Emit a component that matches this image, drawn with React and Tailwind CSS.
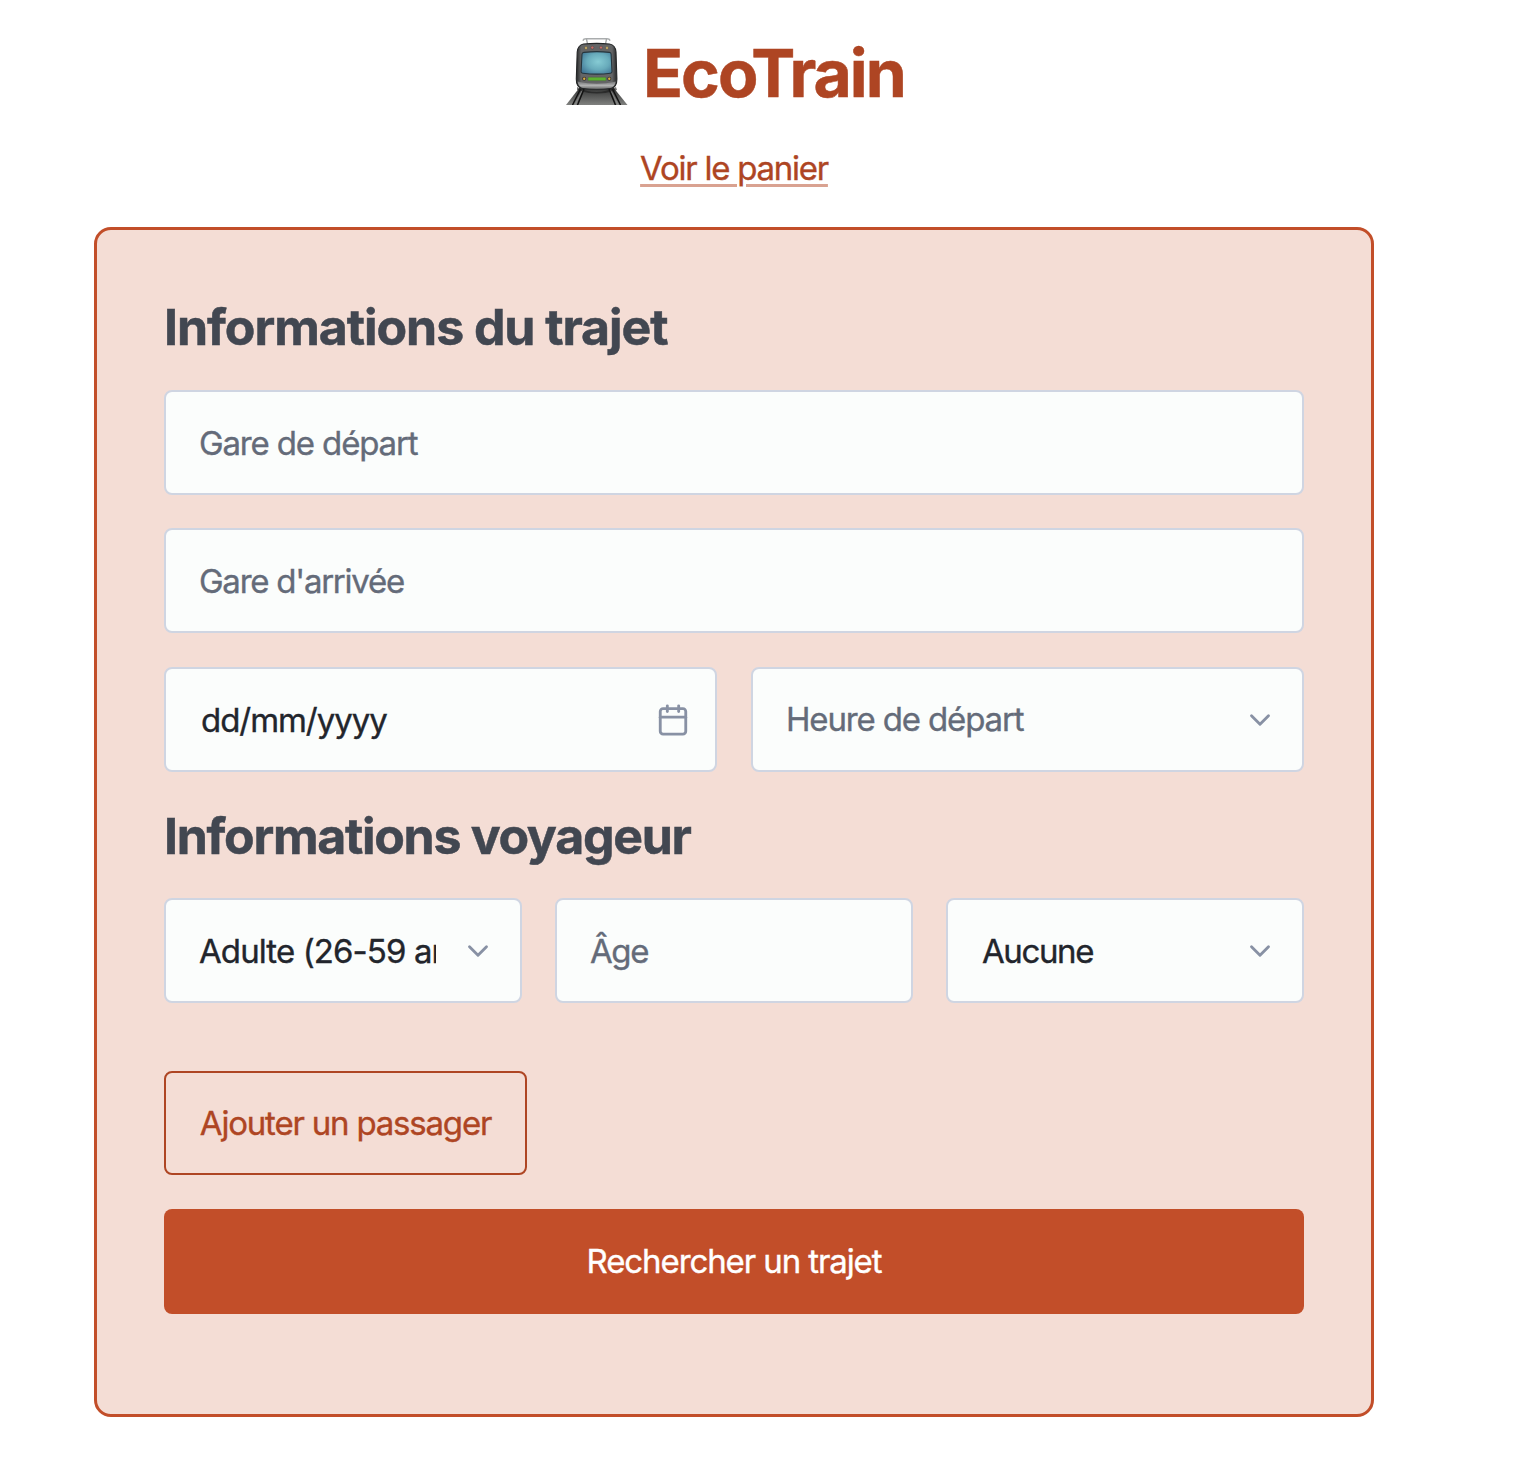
import { Calendar, ChevronDown } from "lucide-react";

function TrainIcon() {
  return (
    <svg className="mt-[-4px] ml-px h-[68px] w-[62px] shrink-0" viewBox="0 0 62 68" fill="none">
      <defs>
        <linearGradient id="track" x1="0" y1="0" x2="0" y2="1">
          <stop offset="0" stopColor="#2c2d2d" />
          <stop offset="1" stopColor="#80817f" />
        </linearGradient>
        <linearGradient id="body" x1="0" y1="0" x2="1" y2="0">
          <stop offset="0" stopColor="#242627" />
          <stop offset="0.12" stopColor="#646566" />
          <stop offset="0.88" stopColor="#646566" />
          <stop offset="1" stopColor="#242627" />
        </linearGradient>
        <linearGradient id="skirt" x1="0" y1="0" x2="0" y2="1">
          <stop offset="0" stopColor="#747577" />
          <stop offset="0.55" stopColor="#b0b1b1" />
          <stop offset="1" stopColor="#6c6d6d" />
        </linearGradient>
        <radialGradient id="glass" cx="0.55" cy="0.45" r="0.65">
          <stop offset="0" stopColor="#86cbd4" />
          <stop offset="0.55" stopColor="#68abbb" />
          <stop offset="1" stopColor="#427796" />
        </radialGradient>
      </defs>
      <path d="M14 50H47L61.5 68H0Z" fill="url(#track)" />
      <path d="M14.5 52L6.5 68M18 52L11.5 68M46.5 52L54.5 68M43 52L49.5 68" stroke="#111" strokeWidth="1.5" />
      <path d="M16.3 53L9 68M44.7 53L52 68" stroke="#8d8e8e" strokeWidth="0.8" />
      <path d="M11 50Q30 60 50 50L51 53Q31 60 11 53Z" fill="#1b1b1b" opacity="0.6" />
      <path d="M17.2 3.2Q17.5 1.8 20 1.8H41Q43.5 1.8 43.8 3.2" stroke="#a9acad" strokeWidth="1.5" strokeLinecap="round" />
      <path d="M20.5 2L21.5 7M40.5 2L39.5 7" stroke="#a1a4a5" strokeWidth="1.3" />
      <path d="M17.5 7Q31 5.8 43.5 7Q49.4 8 50 15L50.9 42Q51 50 45 51.4Q31 53.2 16 51.4Q10.2 50 10.3 42L11.2 15Q12 8 17.5 7Z" fill="url(#body)" stroke="#242627" strokeWidth="1.1" />
      <path d="M11.5 44.5Q31 49 49.8 44.5Q49 49.8 44 51Q31 52.6 17.5 51Q12.3 49.8 11.5 44.5Z" fill="url(#skirt)" />
      <path d="M16 17Q16.2 15.6 18 15.4Q31 13.9 43.5 15.4Q45 15.6 45.1 17L46 34.5Q46 36 44.5 36.2Q31 38 16.7 36.2Q15 36 15.1 34.5Z" fill="url(#glass)" stroke="#26353d" strokeWidth="1.1" />
      <rect x="22" y="40.2" width="18" height="3.5" rx="0.5" fill="#5cb130" stroke="#4a5742" strokeWidth="0.4" />
      <circle cx="18.2" cy="41.8" r="2" fill="#35322d" />
      <circle cx="43.3" cy="41.8" r="2" fill="#35322d" />
      <circle cx="18.2" cy="41.8" r="1.2" fill="#dbad45" />
      <circle cx="43.3" cy="41.8" r="1.2" fill="#dbad45" />
      <g stroke="#454545" strokeWidth="0.5">
        <circle cx="20" cy="11" r="1.4" fill="#e0bf6c" />
        <circle cx="26.3" cy="10.6" r="1.5" fill="#c86c66" />
        <circle cx="35" cy="10.6" r="1.5" fill="#c86c66" />
        <circle cx="41" cy="11" r="1.4" fill="#e0bf6c" />
      </g>
    </svg>
  );
}

const label = "text-[33px] whitespace-nowrap [-webkit-text-stroke:0.35px]";

const field = `${label} flex h-[105px] min-w-0 items-center rounded-[8px] border-2 border-[#cfd5e2] bg-[#fbfdfc] pl-[33px] pr-[24px]`;

function Title({ children, className }) {
  return (
    <h2 className={`text-[50px] leading-[60px] font-bold whitespace-nowrap text-[#424751] [-webkit-text-stroke:0.5px] ${className}`}>
      {children}
    </h2>
  );
}

function Chevron() {
  return <ChevronDown className="ml-auto mr-[1px] size-[34px] shrink-0 text-[#8891a4]" />;
}

export default function App() {
  return (
    <main className="h-[1460px] overflow-hidden bg-white pl-[94px] font-['Inter',sans-serif]">
      <div className="w-[1280px]">
        <header className="flex h-[227px] flex-col items-center pt-[33px]">
          <h1 className="flex h-[80px] w-[338px] items-center gap-[15px] text-[66px] font-bold text-[#ae4523] [-webkit-text-stroke:0.5px]">
            <TrainIcon />
            <span className="tracking-[-2px]">EcoTrain</span>
          </h1>
          <a
            href="#"
            className={`${label} mt-[31px] leading-[48px] tracking-[-1.25px] text-[#ae4523] underline decoration-[#d9a291] decoration-[3px] underline-offset-[4px]`}
          >
            Voir le panier
          </a>
        </header>

        <form className="flex h-[1190px] flex-col rounded-[17px] border-[3px] border-[#c24e29] bg-[#f4ddd5] px-[67px] pt-[67px]">
          <Title className="tracking-[-1.05px]">Informations du trajet</Title>
          <div className={`${field} mt-[33px] text-[#646b79]`}>
            <span className="pt-[2px] tracking-[-1.15px]">Gare de départ</span>
          </div>
          <div className={`${field} mt-[33px] text-[#646b79]`}>
            <span className="pt-[2px] tracking-[-1.25px]">Gare d'arrivée</span>
          </div>
          <div className="mt-[34px] grid grid-cols-2 gap-[34px]">
            <div className={`${field} text-[#22252c]`}>
              <span className="pt-[2px] pl-[2px] tracking-[-1.05px]">dd/mm/yyyy</span>
              <Calendar className="ml-auto mr-[1px] size-[34px] shrink-0 text-[#8891a4]" />
            </div>
            <div className={`${field} text-[#646b79]`}>
              <span className="pt-px tracking-[-1.15px]">Heure de départ</span>
              <Chevron />
            </div>
          </div>
          <Title className="mt-[34px] tracking-[-1.3px]">Informations voyageur</Title>
          <div className="mt-[32px] grid grid-cols-3 gap-[33px]">
            <div className={`${field} text-[#22252c]`}>
              <span className="w-[237px] overflow-hidden pt-[2px] tracking-[-0.9px]">Adulte (26-59 ans)</span>
              <Chevron />
            </div>
            <div className={`${field} text-[#646b79]`}>
              <span className="pt-[2px] tracking-[-1.4px]">Âge</span>
            </div>
            <div className={`${field} text-[#22252c]`}>
              <span className="pt-[2px] pl-px tracking-[-1.4px]">Aucune</span>
              <Chevron />
            </div>
          </div>
          <button
            type="button"
            className={`${label} mt-[68px] h-[104px] w-[363px] rounded-[8px] border-2 border-[#ae4523] pt-px tracking-[-1.2px] text-[#ae4523]`}
          >
            Ajouter un passager
          </button>
          <button
            type="button"
            className={`${label} mt-[34px] h-[105px] rounded-[8px] bg-[#c24e29] pt-px tracking-[-1.1px] text-white`}
          >
            Rechercher un trajet
          </button>
        </form>
      </div>
    </main>
  );
}
